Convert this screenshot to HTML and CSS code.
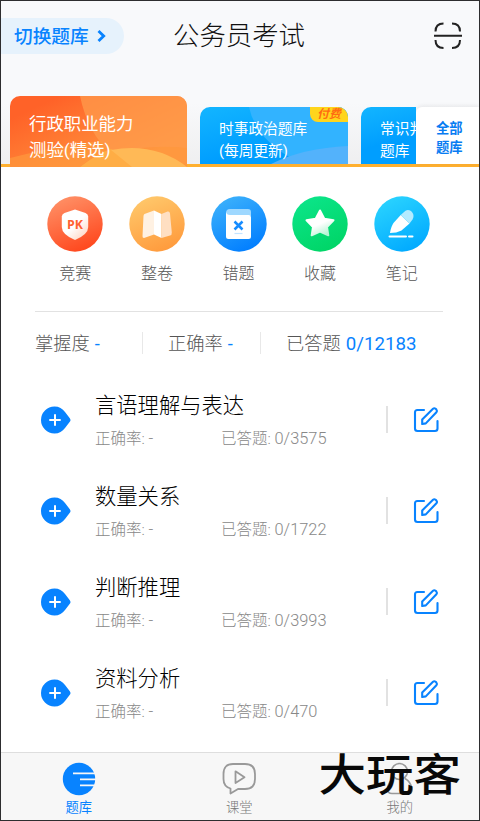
FILE: index.html
```html
<!DOCTYPE html>
<html lang="zh-CN">
<head>
<meta charset="utf-8">
<title>公务员考试</title>
<link rel="stylesheet" href="styles.css">
</head>
<body>
<svg class="defs" width="0" height="0">
  <defs>
    <linearGradient id="red" x1=".2" y1="0" x2=".6" y2="1"><stop offset="0" stop-color="#ff9268"/><stop offset="1" stop-color="#ff481e"/></linearGradient>
    <linearGradient id="orange" x1=".2" y1="0" x2=".6" y2="1"><stop offset="0" stop-color="#ffc96c"/><stop offset="1" stop-color="#ff9b3d"/></linearGradient>
    <linearGradient id="blue" x1=".2" y1="0" x2=".7" y2="1"><stop offset="0" stop-color="#3db2fb"/><stop offset="1" stop-color="#007dff"/></linearGradient>
    <linearGradient id="green" x1=".2" y1="0" x2=".7" y2="1"><stop offset="0" stop-color="#0be58a"/><stop offset="1" stop-color="#00d566"/></linearGradient>
    <linearGradient id="cyan" x1=".2" y1="0" x2=".7" y2="1"><stop offset="0" stop-color="#2bd4ff"/><stop offset="1" stop-color="#00a9ff"/></linearGradient>
    <linearGradient id="shieldFill" x1="0" y1="0" x2=".8" y2="1"><stop offset=".55" stop-color="#fff"/><stop offset="1" stop-color="#ffd6c4"/></linearGradient>
    <linearGradient id="starFill" x1=".2" y1="0" x2=".7" y2="1"><stop offset=".55" stop-color="#fff"/><stop offset="1" stop-color="#b4f3d2"/></linearGradient>
    <symbol id="plus" viewBox="0 0 30 28"><path d="M13.500.5C18 .5 21.500 2.500 24 6l4.800 6.200q1.400 1.800 0 3.600L24 22C21.500 25.500 18 27.500 13.500 27.500A13.500 13.500 0 0 1 13.500.5Z" fill="#0883ff"/><path d="M8.300 14H19.700M14 8.300V19.700" stroke="#fff" stroke-width="2"/></symbol>
    <symbol id="edit" viewBox="0 0 28 28"><path d="M11 4H4.500Q2 4 2 6.500V22.500Q2 25 4.500 25H22Q24.500 25 24.500 22.500V15" fill="none" stroke="#0883ff" stroke-width="2.100" stroke-linecap="round"/><path d="M9.200 18V13.400L20 2.800Q21.300 1.700 22.600 2.800L23.400 3.600Q24.500 4.900 23.400 6.200L12.800 17.400Z" fill="none" stroke="#0883ff" stroke-width="2.100" stroke-linejoin="round"/></symbol>
  </defs>
</svg>
<div class="app">
  <header class="header">
    <div class="switch"><span>切换题库</span><svg width="9" height="12" viewBox="0 0 9 12"><path d="M1.500 1L6.700 6L1.500 11" fill="none" stroke="#0883ff" stroke-width="2.800"/></svg></div>
    <h1 class="title">公务员考试</h1>
    <svg class="scan" width="28" height="28" viewBox="0 0 28 28" fill="none" stroke="#222" stroke-width="2"><path d="M1.500 9.500C1.500 4.500 4.500 1.500 9.500 1.500M18 1.500C23 1.500 26 4.500 26 9.500M1.500 18C1.500 23.500 4.500 26 9.500 26M18 26C23 26 26 23.500 26 18M0 13.800H28"/></svg>
  </header>

  <div class="tabs">
    <div class="tab active">
      <svg class="tab-art" viewBox="0 0 177 71" preserveAspectRatio="none"><path d="M70 0Q78 38 101 57Q140 48 177 52V0Z" fill="#ff9b4c" opacity=".75"/><path d="M0 62Q45 50 91 45L101 54Q82 60 70 71H0Z" fill="#ff9b3d" opacity=".65"/><path d="M70 71Q88 57 101 53L140 71Z" fill="#ffad45"/><path d="M101 54Q145 46 177 71H122Z" fill="#ffb956"/></svg>
      <span>行政职业能力<br>测验(精选)</span>
    </div>
    <div class="tab paid">
      <svg class="tab-art" viewBox="0 0 148 57" preserveAspectRatio="none"><path d="M49 0Q55 30 91 51Q109 55 129 51L148 44V0Z" fill="#32b3ff"/><path d="M71 57Q103 41 148 39V57Z" fill="#53b2fb"/></svg>
      <span>时事政治题库<br>(每周更新)</span>
      <em class="badge">付费</em>
    </div>
    <div class="tab clipped"><span>常识判<br>题库</span></div>
    <div class="all">全部<br>题库</div>
  </div>

  <nav class="quick">
    <div class="quick-item">
      <svg width="56" height="56" viewBox="0 0 56 56"><circle cx="28" cy="28" r="27.700" fill="url(#red)"/><path d="M28 13.500L38.500 17Q41.200 18 41.200 20.500V31Q41.200 38.500 28 44Q14.800 38.500 14.800 31V20.500Q14.800 18 17.500 17Z" fill="url(#shieldFill)"/><text class="pk" x="28" y="33" textLength="16" lengthAdjust="spacingAndGlyphs">PK</text></svg>
      <span>竞赛</span>
    </div>
    <div class="quick-item">
      <svg width="56" height="56" viewBox="0 0 56 56"><circle cx="28" cy="28" r="27.700" fill="url(#orange)"/><path d="M15.500 18L25 14.500V38.500L15 42Q13.300 42 13.500 40L14.500 20Q14.600 18.500 15.500 18Z" fill="#fff1e2"/><path d="M25 14.500L32.500 18V42L25 38.500Z" fill="#fff"/><path d="M32.500 18L38.500 15.500Q40.700 15 41 17.500L42.800 36.500Q43 39 41 39.500L32.500 42Z" fill="#ffdfc2"/></svg>
      <span>整卷</span>
    </div>
    <div class="quick-item">
      <svg width="56" height="56" viewBox="0 0 56 56"><circle cx="28" cy="28" r="27.700" fill="url(#blue)"/><path d="M15 17Q15 13 19 13H37Q40 13 40 16V20H15Z" fill="#9ed8ff"/><path d="M15 16Q15.500 19 19 19H37.500Q40 19 40 21.500V40.500Q40 43 37.500 43H17.500Q15 43 15 40.500Z" fill="#fff"/><path d="M23.500 25.500L31.500 33.500M31.500 25.500L23.500 33.500" stroke="#178cff" stroke-width="2.500"/><path d="M23.500 37.500H31.500" stroke="#c5e3ff" stroke-width="1.200"/></svg>
      <span>错题</span>
    </div>
    <div class="quick-item">
      <svg width="56" height="56" viewBox="0 0 56 56"><circle cx="28" cy="28" r="27.700" fill="url(#green)"/><path d="M28 14.500L32.300 22.800L41.500 24.300L35 31L36.300 39.300L28 35.700L19.700 39.300L21 31L14.500 24.300L23.700 22.800Z" fill="url(#starFill)" stroke="url(#starFill)" stroke-width="2" stroke-linejoin="round"/></svg>
      <span>收藏</span>
    </div>
    <div class="quick-item">
      <svg width="56" height="56" viewBox="0 0 56 56"><circle cx="28" cy="28" r="27.700" fill="url(#cyan)"/><path d="M26.700 19L35.500 27.500L27.500 34.500Q22.500 37 16 37Q17 30.500 19.500 27Z" fill="#fff"/><path d="M26.700 19L31.500 14.700Q34 13 37 15L38.500 16.800Q40.500 20 38.500 23.500L35.500 27.500Z" fill="#b5ebff"/><path d="M15.500 40.500H32M35 40.500H38.500" stroke="#fff" stroke-width="2" stroke-linecap="round"/></svg>
      <span>笔记</span>
    </div>
  </nav>

  <section class="stats">
    <div class="stat mastery">掌握度<b>-</b></div>
    <div class="stat accuracy">正确率<b>-</b></div>
    <div class="stat answered">已答题<b>0/12183</b></div>
  </section>

  <main class="list">
    <article class="row">
      <svg class="plus" width="30" height="28"><use href="#plus"/></svg>
      <div class="info"><h2>言语理解与表达</h2><p><span>正确率: <i>-</i></span><span>已答题: <i>0/3575</i></span></p></div>
      <div class="action"><svg width="28" height="28"><use href="#edit"/></svg></div>
    </article>
    <article class="row">
      <svg class="plus" width="30" height="28"><use href="#plus"/></svg>
      <div class="info"><h2>数量关系</h2><p><span>正确率: <i>-</i></span><span>已答题: <i>0/1722</i></span></p></div>
      <div class="action"><svg width="28" height="28"><use href="#edit"/></svg></div>
    </article>
    <article class="row">
      <svg class="plus" width="30" height="28"><use href="#plus"/></svg>
      <div class="info"><h2>判断推理</h2><p><span>正确率: <i>-</i></span><span>已答题: <i>0/3993</i></span></p></div>
      <div class="action"><svg width="28" height="28"><use href="#edit"/></svg></div>
    </article>
    <article class="row">
      <svg class="plus" width="30" height="28"><use href="#plus"/></svg>
      <div class="info"><h2>资料分析</h2><p><span>正确率: <i>-</i></span><span>已答题: <i>0/470</i></span></p></div>
      <div class="action"><svg width="28" height="28"><use href="#edit"/></svg></div>
    </article>
  </main>

  <footer class="nav">
    <div class="nav-item on">
      <svg width="34" height="34" viewBox="0 0 34 34"><circle cx="17" cy="17" r="16.200" fill="#0883ff"/><path d="M11 11.300H34M18 17.300H34M18 23.300H34" stroke="#f7f7f7" stroke-width="1.800"/></svg>
      <span>题库</span>
    </div>
    <div class="nav-item">
      <svg width="34" height="34" viewBox="0 0 34 34" fill="none" stroke="#999" stroke-width="1.800" stroke-linejoin="round"><path d="M11 2H23Q33 2 33 12V17Q33 27 23 27H16L8.500 31.500V26.500Q1.500 24.500 1.500 17V12Q1.500 2 11 2Z"/><path d="M13.500 9.300L22.500 15.200L13.500 21Z"/></svg>
      <span>课堂</span>
    </div>
    <div class="nav-item">
      <svg width="34" height="34" viewBox="0 0 34 34" fill="none" stroke="#999" stroke-width="1.600"><circle cx="16.500" cy="9.500" r="8"/><path d="M11 16.500Q5 20 4.500 27Q4.500 31.500 9 31.500H25Q29.500 31.500 29 27Q28 20 22 16.500"/></svg>
      <span>我的</span>
    </div>
    <div class="watermark">大玩客</div>
  </footer>
</div>
</body>
</html>
```
FILE: styles.css
```css
* { box-sizing: border-box; margin: 0; padding: 0; }
body {
  width: 480px;
  height: 821px;
  overflow: hidden;
  font-family: Roboto, "Noto Sans CJK SC", sans-serif;
  font-weight: 300;
  background: #fff;
}
.defs { position: absolute; }
.app {
  display: flex;
  flex-direction: column;
  width: 480px;
  height: 821px;
  border: 1px solid #2d2d2f;
  overflow: hidden;
}

.header {
  display: grid;
  grid-template-columns: 123px 1fr 125px;
  align-items: center;
  height: 69px;
  background: #f8f9fb;
}
.switch {
  display: flex;
  align-items: center;
  gap: 8px;
  height: 36px;
  padding-left: 13px;
  border-radius: 0 18px 18px 0;
  background: #e6f2fc;
  color: #0883ff;
  font-size: 18.700px;
  font-weight: 500;
}
.switch span { margin-top: -3px; }
.title { font-size: 26.400px; font-weight: 300; color: #111; text-align: center; line-height: 40px; white-space: nowrap; }
.scan { justify-self: end; margin-right: 17px; }

.tabs {
  display: flex;
  align-items: flex-end;
  height: 97px;
  flex: none;
  padding-left: 9px;
  border-bottom: 3px solid #ffb02f;
  background: linear-gradient(#f8f9fb 35%, #efeff0);
}
.tab {
  position: relative;
  flex: none;
  width: 148px;
  height: 57px;
  margin-right: 13px;
  padding: 11px 0 0 19px;
  border-radius: 10px 10px 0 0;
  overflow: hidden;
  background: linear-gradient(165deg, #13b5ff, #009eff 60%);
  color: #fff;
  font-size: 14.700px;
  font-weight: 400;
  line-height: 22px;
  white-space: nowrap;
}
.tab span { position: relative; }
.tab.active {
  width: 177px;
  height: 71px;
  margin-bottom: -3px;
  padding-top: 15px;
  background: linear-gradient(155deg, #ff6228 15%, #ff983f 80%);
  font-size: 17.400px;
  line-height: 26px;
}
.tab.clipped { width: 55px; margin-right: 0; border-top-right-radius: 0; }
.tab-art { position: absolute; left: 0; top: 0; width: 100%; height: 100%; }
.badge {
  position: absolute;
  right: 0;
  top: 0;
  width: 38px;
  height: 15px;
  border-bottom-left-radius: 8px;
  background: #ffd51c;
  color: #ff6c12;
  font-size: 12px;
  font-weight: 700;
  line-height: 14px;
  text-align: center;
}
.all {
  flex: 1;
  height: 57px;
  padding: 12px 0 0 20px;
  border-radius: 6px 0 0 0;
  background: #fff;
  box-shadow: 0 -1px 4px rgba(0, 0, 0, .08);
  color: #087cf2;
  font-size: 13.300px;
  font-weight: 700;
  line-height: 19px;
}

.quick {
  display: grid;
  grid-template-columns: repeat(5, 81.600px);
  justify-content: center;
  margin: 29px 36px 0 34px;
  height: 116px;
  flex: none;
  border-bottom: 1px solid #e2e2e2;
}
.quick-item {
  display: flex;
  flex-direction: column;
  align-items: center;
  gap: 10px;
  color: #555;
  font-size: 16px;
  line-height: 24px;
}
.quick-item svg { margin-left: -1px; }
.quick-item span { margin-left: -1px; }
.pk { fill: #ff6131; font: 700 13px "Open Sans", sans-serif; text-anchor: middle; }

.stats { display: flex; align-items: center; height: 62px; padding-left: 34px; flex: none; }
.stat { height: 22px; font-size: 18.300px; line-height: 24px; color: #555; white-space: nowrap; }
.stat b { color: #0883ff; font-weight: 400; margin-left: 5px; }
.mastery { width: 107px; }
.accuracy { width: 119px; padding-left: 25px; border-left: 1px solid #e8e8e8; border-right: 1px solid #e8e8e8; }
.answered { padding-left: 25px; }
.mastery b, .accuracy b { margin-left: 5px; }
.answered b { font-size: 18.700px; }

.list { flex: 1; }
.row { display: flex; align-items: center; height: 91px; padding-left: 40px; }
.info { width: 291px; margin-left: 24px; padding-top: 3px; }
.info h2 { font-size: 21.300px; font-weight: 300; line-height: 32px; color: #000; }
.info p { display: flex; margin-top: 4px; font-size: 15.500px; line-height: 26px; color: #888; }
.info p span { width: 126px; white-space: nowrap; }
.info i { font-style: normal; font-size: 16.400px; }
.action { display: flex; align-items: center; height: 27px; padding-left: 25px; border-left: 2px solid #e2e2e2; }

.nav {
  position: relative;
  display: grid;
  grid-template-columns: repeat(3, 160.500px);
  justify-content: start;
  padding-left: -2px;
  height: 68px;
  flex: none;
  border-top: 1px solid #dedede;
  background: #f7f7f7;
}
.nav-item {
  display: flex;
  flex-direction: column;
  align-items: center;
  padding-top: 9px;
  margin-left: -5px;
  color: #777;
  font-size: 13.300px;
  line-height: 22px;
}
.nav-item span { margin-top: 1px; }
.nav-item.on { color: #0883ff; font-weight: 400; }
.watermark {
  position: absolute;
  right: 18px;
  top: 2px;
  color: #080808;
  font-size: 47.500px;
  font-weight: 500;
  line-height: 42px;
  transform: scaleY(.93);
}
```
